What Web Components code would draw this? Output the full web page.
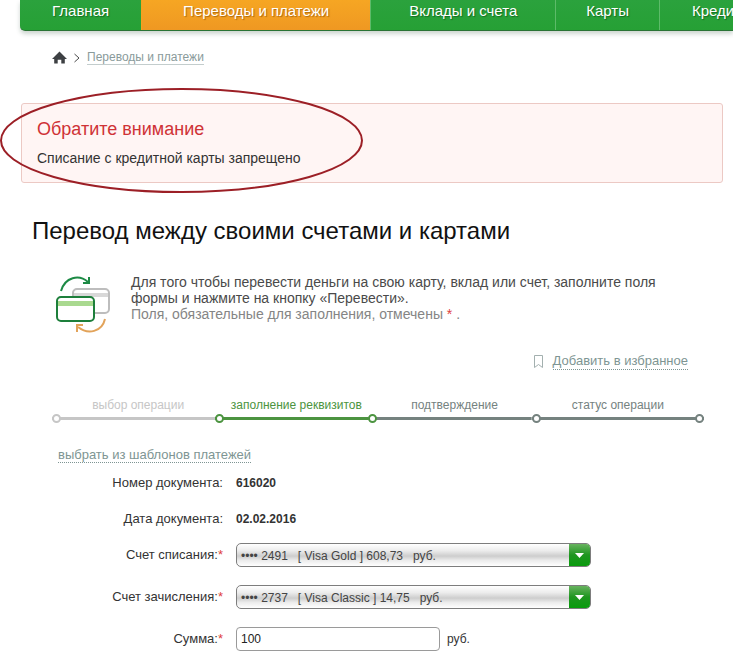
<!DOCTYPE html>
<html lang="ru">
<head>
<meta charset="utf-8">
<title>Перевод между своими счетами и картами</title>
<style>
html {
  overflow-x: hidden;
}

body {
  margin: 0;
  background: #fff;
  color: #333;
  font: 13px/16px "Liberation Sans", Arial, sans-serif;
}

.form {
  display: block;
  margin: 0 20px;
}
</style>
</head>
<body>

<site-nav></site-nav>
<bread-crumbs></bread-crumbs>

<notice-box>
  <span slot="title">Обратите внимание</span>
  Списание с кредитной карты запрещено
</notice-box>

<transfer-intro>
  <span slot="title">Перевод между своими счетами и картами</span>
  Для того чтобы перевести деньги на свою карту, вклад или счет, заполните поля формы и нажмите на кнопку «Перевести».
</transfer-intro>

<favorite-link></favorite-link>
<step-line current="1"></step-line>

<form class="form">
  <template-link>выбрать из шаблонов платежей</template-link>
  <document-field label="Номер документа:">616020</document-field>
  <document-field label="Дата документа:">02.02.2016</document-field>
  <account-select label="Счет списания:" value="•••• 2491&nbsp;&nbsp; [ Visa Gold ] 608,73&nbsp;&nbsp; руб."></account-select>
  <account-select label="Счет зачисления:" value="•••• 2737&nbsp;&nbsp; [ Visa Classic ] 14,75&nbsp;&nbsp; руб."></account-select>
  <sum-field label="Сумма:" value="100">руб.</sum-field>
</form>

<script>
// Creates the shadow root and fills it from a template
function render(element, html) {
  const template = document.createElement("template");
  template.innerHTML = html;
  element.attachShadow({ mode: "open" });
  element.shadowRoot.appendChild(template.content.cloneNode(true));
}

// Styles shared by every row of the form
const rowStyles = `
:host {
  display: flex;
  align-items: center;
  gap: 13px;
  min-height: 24px;
  margin-bottom: 18px;
}

.label {
  flex: 0 0 203px;
  text-align: right;
}

.required {
  color: #e04040;
}
`;

class SiteNav extends HTMLElement {
  constructor() {
    super();

    render(this, `
<style>
:host {
  display: block;
  overflow: hidden;
  padding: 0 0 8px 20px;
}

ul {
  display: flex;
  margin: 0;
  padding: 0;
  list-style: none;
  background: linear-gradient(#2ba23d, #26a035);
  border-bottom: 1px solid #2a7335;
  border-bottom-left-radius: 5px;
  box-shadow: 0 3px 4px rgba(60, 90, 70, .25);
}

li + li {
  border-left: 1px solid #5dbb69;
}

a {
  display: block;
  padding: 2px 32px 10px;
  color: #fff;
  font-size: 15px;
  line-height: 18px;
  text-decoration: none;
  text-shadow: 1px 1px 1px rgba(0, 60, 10, .5);
  white-space: nowrap;
}

li.active {
  border-color: #f5a11f;
}

.wide a {
  padding-left: 38px;
  padding-right: 38px;
}

.narrow a {
  padding-left: 30px;
  padding-right: 30px;
}

.active a {
  padding-left: 41px;
  padding-right: 41px;
  background: linear-gradient(#f6a623, #ef9822);
  text-shadow: 1px 1px 1px rgba(130, 70, 0, .6);
}
</style>

<nav>
  <ul>
    <li><a href="#">Главная</a></li>
    <li class="active"><a href="#">Переводы и платежи</a></li>
    <li class="wide"><a href="#">Вклады и счета</a></li>
    <li class="narrow"><a href="#">Карты</a></li>
    <li><a href="#">Кредиты</a></li>
  </ul>
</nav>
`);
  }
}

class BreadCrumbs extends HTMLElement {
  constructor() {
    super();

    render(this, `
<style>
:host {
  display: block;
  padding: 11px 20px 38px 52px;
}

nav {
  display: flex;
  align-items: center;
  gap: 6px;
  font-size: 12px;
}

.home {
  display: flex;
}

.text {
  color: #8a9b9b;
  line-height: 14px;
  text-decoration: none;
  border-bottom: 1px solid #c3cdcd;
}
</style>

<nav>
  <a class="home" href="#" aria-label="Главная">
    <svg width="16" height="14" viewBox="0 0 16 14" fill="#3d4043">
      <path d="M7.500 0.500 L15 8 H12.800 V12.500 H9.300 V8.800 H5.700 V12.500 H2.200 V8 H0 Z"/>
    </svg>
  </a>
  <svg width="7" height="10" viewBox="0 0 7 10" fill="none" stroke="#4a4a4a">
    <path d="M0.500 1 L5 5 L0.500 9"/>
  </svg>
  <a class="text" href="#">Переводы и платежи</a>
</nav>
`);
  }
}

class NoticeBox extends HTMLElement {
  constructor() {
    super();

    render(this, `
<style>
:host {
  display: block;
  position: relative;
  margin: 0 10px 0 21px;
  padding: 15px 15px 16px;
  background: #fff5f4;
  border: 1px solid #ecc9c4;
  border-radius: 3px;
  font-size: 14px;
}

h2 {
  margin: 0 0 11px;
  color: #cf3236;
  font-size: 18px;
  font-weight: normal;
  line-height: 20px;
}

/* Hand-drawn mark that goes over the edges of the box */
.mark {
  position: absolute;
  top: -16px;
  left: -22px;
  pointer-events: none;
}
</style>

<h2><slot name="title"></slot></h2>
<slot></slot>
<svg class="mark" width="364" height="106" viewBox="0 0 364 106" fill="none" stroke="#9c1f26" stroke-width="2">
  <ellipse cx="181.500" cy="52.500" rx="180.500" ry="51.500"/>
</svg>
`);
  }
}

class TransferIntro extends HTMLElement {
  constructor() {
    super();

    render(this, `
<style>
:host {
  display: block;
  padding: 34px 60px 19px 32px;
}

h1 {
  margin: 0 0 29px;
  color: #111;
  font-size: 24px;
  font-weight: normal;
  line-height: 28px;
}

.text {
  display: flex;
  gap: 19px;
  margin-left: 23px;
  color: #4a4a4a;
  font-size: 14px;
}

svg {
  flex: none;
}

p {
  margin: 0;
}

.hint {
  color: #858585;
}

.required {
  color: #e04040;
}
</style>

<h1><slot name="title"></slot></h1>
<div class="text">
  <svg width="57" height="60" viewBox="0 0 57 60" fill="none" stroke-width="2">
    <rect x="18" y="15" width="36" height="24" rx="4" stroke="#bdbdbd"/>
    <path d="M19 21 H53" stroke="#d8d8d8" stroke-width="4"/>
    <rect x="2" y="23" width="37" height="24" rx="4" fill="#fff" stroke="#1d7f3b"/>
    <path d="M3 29.500 H38" stroke="#a9d98f" stroke-width="5"/>
    <path d="M6 17 C10 3 24 0 33 8" stroke="#1d8a45"/>
    <path d="M34 3 V9 H28" stroke="#1d8a45"/>
    <path d="M50 45 C47 58 33 61 23 53" stroke="#e2a35a"/>
    <path d="M22 58 V51 H28" stroke="#e2a35a"/>
  </svg>
  <div>
    <p><slot></slot></p>
    <p class="hint">Поля, обязательные для заполнения, отмечены <span class="required">*</span> .</p>
  </div>
</div>
`);
  }
}

class FavoriteLink extends HTMLElement {
  constructor() {
    super();

    render(this, `
<style>
:host {
  display: flex;
  justify-content: flex-end;
  align-items: center;
  gap: 9px;
  padding-right: 45px;
}

a {
  color: #7e9593;
  text-decoration: none;
  border-bottom: 1px dotted #7e9593;
}
</style>

<svg width="10" height="14" viewBox="0 0 10 14" fill="none" stroke="#a3b0af">
  <path d="M0.500 0.500 H8.500 V12.500 L4.500 9.500 L0.500 12.500 Z"/>
</svg>
<a href="#">Добавить в избранное</a>
`);
  }
}

class StepLine extends HTMLElement {
  constructor() {
    super();

    const current = Number(this.getAttribute("current"));
    const steps = ["выбор операции", "заполнение реквизитов", "подтверждение", "статус операции"];
    const items = steps.map((step, index) => {
      const state = index < current ? "done" : index === current ? "current" : "next";
      return `<li class="${state}"><span>${step}</span><i></i></li>`;
    });

    render(this, `
<style>
:host {
  display: block;
  padding: 27px 29px 0 52px;
}

ol {
  display: flex;
  margin: 0;
  padding: 0;
  list-style: none;
  font-size: 12px;
  text-align: center;
}

li {
  flex: 16 1 0;
  color: #75827f;
}

span {
  display: block;
  padding: 0 0 1px 9px;
}

/* A ring at the start of every segment, the line fills the rest */
i {
  display: flex;
  align-items: center;
  background: linear-gradient(currentColor, currentColor) center / 100% 3px no-repeat;
}

i::before,
li:last-child i::after {
  content: "";
  flex: none;
  box-sizing: border-box;
  width: 9px;
  height: 9px;
  border: 2px solid currentColor;
  border-radius: 50%;
  background: #fff;
}

.done {
  color: #c6c6c6;
}

.current {
  flex-grow: 15;
  color: #4c9440;
}

.current + .next i::before {
  border-color: #4c9440;
}

/* The last segment has a second ring that closes the line */
li:last-child {
  flex-basis: 9px;
}

li:last-child span {
  padding-left: 0;
}

li:last-child i {
  justify-content: space-between;
}
</style>

<ol>${items.join("")}</ol>
`);
  }
}

class TemplateLink extends HTMLElement {
  constructor() {
    super();

    render(this, `
<style>
:host {
  display: block;
  padding: 24px 0 8px 38px;
}

a {
  color: #7e9593;
  text-decoration: none;
  border-bottom: 1px dotted #7e9593;
}
</style>

<a href="#"><slot></slot></a>
`);
  }
}

class DocumentField extends HTMLElement {
  constructor() {
    super();

    render(this, `
<style>
${rowStyles}

:host {
  margin-bottom: 12px;
}

output {
  font-size: 12px;
  font-weight: bold;
}
</style>

<label class="label" for="value">${this.getAttribute("label")}</label>
<output id="value"><slot></slot></output>
`);
  }
}

class AccountSelect extends HTMLElement {
  constructor() {
    super();

    render(this, `
<style>
${rowStyles}

.box {
  display: grid;
  box-sizing: border-box;
  flex: 0 1 355px;
  height: 24px;
  overflow: hidden;
  border: 1px solid #7d7d7d;
  border-radius: 5px;
  background: linear-gradient(#fff, #ececec 30%, #cdcdcd 55%, #ececec 75%, #fff);
}

.box > * {
  grid-area: 1 / 1;
}

select {
  appearance: none;
  width: 100%;
  margin: 0;
  padding: 2px 24px 0 4px;
  border: 0;
  background: none;
  color: #444;
  font: inherit;
  font-size: 12px;
}

svg {
  justify-self: end;
  margin: -1px;
  pointer-events: none;
}
</style>

<label class="label" for="account">${this.getAttribute("label")}<span class="required">*</span></label>
<div class="box">
  <select id="account"><option>${this.getAttribute("value")}</option></select>
  <svg width="22" height="24" viewBox="0 0 22 24">
    <defs>
      <linearGradient id="green" x2="0" y2="1">
        <stop offset="0" stop-color="#6fb565"/>
        <stop offset="0.500" stop-color="#1f9620"/>
        <stop offset="1" stop-color="#079c0b"/>
      </linearGradient>
    </defs>
    <rect width="22" height="24" fill="url(#green)"/>
    <path d="M6 10 H15 L10.500 15 Z" fill="#fff"/>
  </svg>
</div>
`);
  }
}

class SumField extends HTMLElement {
  constructor() {
    super();

    render(this, `
<style>
${rowStyles}

:host {
  margin-bottom: 0;
}

.value {
  display: flex;
  align-items: center;
  gap: 7px;
  font-size: 12px;
}

input {
  box-sizing: border-box;
  width: 204px;
  height: 24px;
  margin: 0;
  padding: 0 4px;
  border: 1px solid #9a9a9a;
  border-radius: 4px;
  background: #fff;
  color: #222;
  font: inherit;
}
</style>

<label class="label" for="sum">${this.getAttribute("label")}<span class="required">*</span></label>
<div class="value">
  <input id="sum" type="text" value="${this.getAttribute("value")}">
  <slot></slot>
</div>
`);
  }
}

customElements.define("site-nav", SiteNav);
customElements.define("bread-crumbs", BreadCrumbs);
customElements.define("notice-box", NoticeBox);
customElements.define("transfer-intro", TransferIntro);
customElements.define("favorite-link", FavoriteLink);
customElements.define("step-line", StepLine);
customElements.define("template-link", TemplateLink);
customElements.define("document-field", DocumentField);
customElements.define("account-select", AccountSelect);
customElements.define("sum-field", SumField);
</script>
</body>
</html>
